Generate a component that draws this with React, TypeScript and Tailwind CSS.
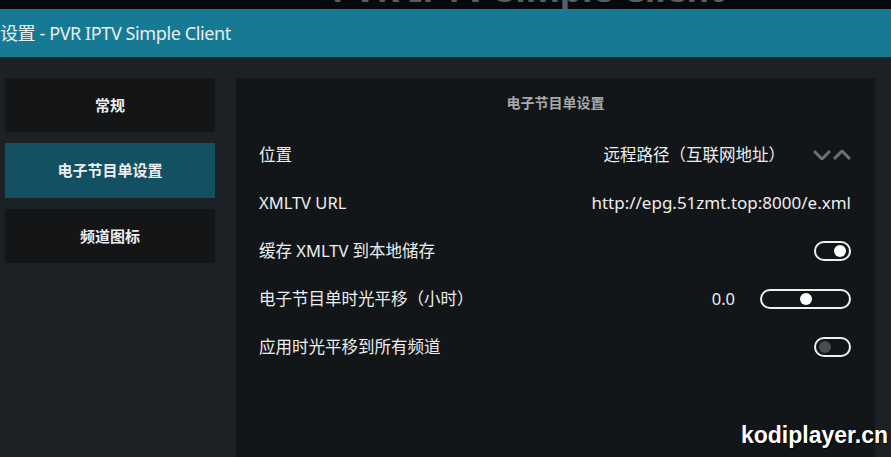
import { useState } from "react";

const menu = ["常规", "电子节目单设置", "频道图标"];

const Toggle = ({ on }: { on: boolean }) => (
  <div className="flex h-[20px] w-[37px] items-center rounded-full border-2 border-[#eef0f0] px-[3px]">
    <div
      className={
        on
          ? "ml-auto h-[12px] w-[12px] rounded-full bg-white"
          : "h-[12px] w-[12px] rounded-full bg-[#4a4d4f]"
      }
    />
  </div>
);

const Row = ({ label, children }: { label: string; children?: React.ReactNode }) => (
  <div className="flex h-[48px] items-center justify-between pl-[23px] pr-[24px]">
    <span>{label}</span>
    <div className="flex items-center">{children}</div>
  </div>
);

export default function App() {
  const [active] = useState(1);

  return (
    <div
      className="relative h-[457px] w-[891px] overflow-hidden bg-[#1b2124] text-[#eceeef]"
      style={{ fontFamily: '"Noto Sans", "Noto Sans CJK SC", sans-serif' }}
    >
      {/* clipped header from the page behind */}
      <div className="relative h-[9px] overflow-hidden bg-[#05090c]">
        <div className="absolute left-[332px] top-[-29px] text-[35px] font-bold leading-[36px] text-[#5a5e60]">
          PVR IPTV Simple Client
        </div>
      </div>

      <div className="flex h-[48px] items-center bg-[#177a94] text-[18px] tracking-[-0.4px] text-[#e8eef0]">
        设置 - PVR IPTV Simple Client
      </div>

      <div className="flex pt-[21px]">
        <div className="flex w-[236px] flex-col gap-[11px] pl-[5px] pr-[21px]">
          {menu.map((m, i) => (
            <div
              key={m}
              className={
                i === active
                  ? "flex h-[55px] items-center justify-center bg-[#135061] text-[15px] font-bold"
                  : "flex h-[54px] items-center justify-center rounded-[2px] bg-[#131517] text-[15px] font-bold"
              }
            >
              {m}
            </div>
          ))}
        </div>

        <div className="h-[400px] w-[639px] bg-[#131618] text-[16.5px]">
          <div className="pt-[14px] text-center text-[14px] font-bold text-[#a7a9aa]">电子节目单设置</div>
          <div className="mt-[18px]">
            <Row label="位置">
              <span>远程路径（互联网地址）</span>
              <span className="ml-[28px] flex items-center gap-[2px]">
                <svg width="18" height="10" viewBox="0 0 18 10">
                  <path d="M1 1 L9 9 L17 1" fill="none" stroke="#6d7072" strokeWidth="3" />
                </svg>
                <svg width="18" height="10" viewBox="0 0 18 10">
                  <path d="M1 9 L9 1 L17 9" fill="none" stroke="#6d7072" strokeWidth="3" />
                </svg>
              </span>
            </Row>
            <Row label="XMLTV URL">
              <span className="text-[17px]">http://epg.51zmt.top:8000/e.xml</span>
            </Row>
            <Row label="缓存 XMLTV 到本地储存">
              <Toggle on />
            </Row>
            <Row label="电子节目单时光平移（小时）">
              <span className="mr-[25px]">0.0</span>
              <div className="flex h-[20px] w-[91px] items-center justify-center rounded-full border-2 border-[#eef0f0]">
                <div className="h-[12px] w-[12px] rounded-full bg-white" />
              </div>
            </Row>
            <Row label="应用时光平移到所有频道">
              <Toggle on={false} />
            </Row>
          </div>
        </div>
      </div>

      <div
        className="absolute bottom-[5px] right-[3px] text-[23px] font-bold text-white"
        style={{ fontFamily: '"Liberation Sans", Arial, sans-serif', textShadow: "1px 1px 1px #000" }}
      >
        kodiplayer.cn
      </div>
    </div>
  );
}
